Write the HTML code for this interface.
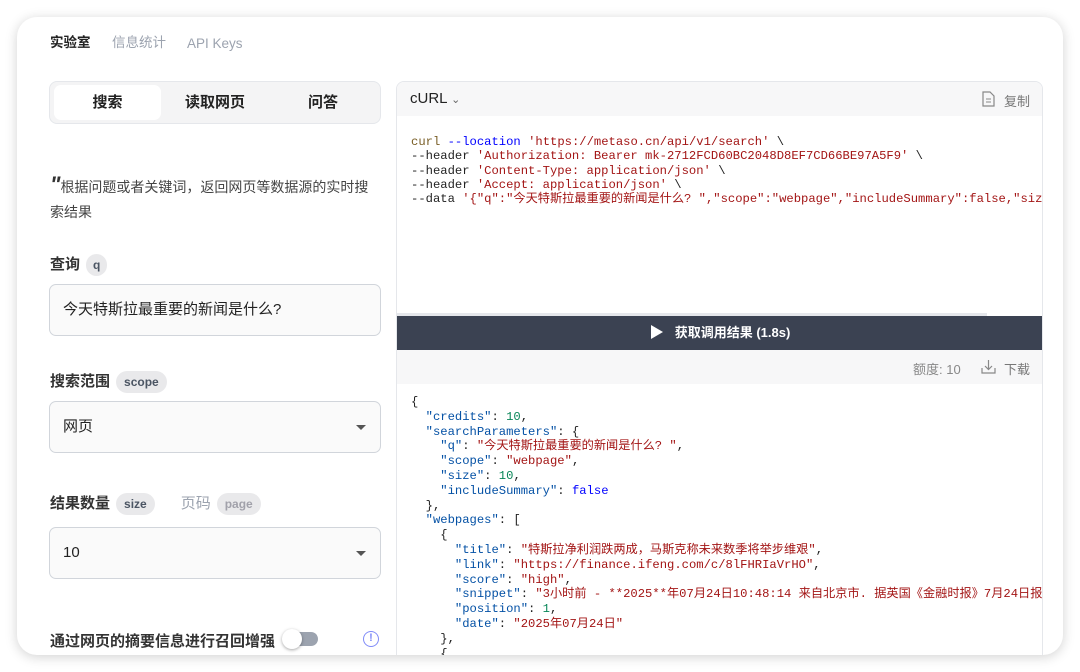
<!DOCTYPE html>
<html><head><meta charset="utf-8"><style>
*{box-sizing:border-box;margin:0;padding:0}
body{width:1080px;height:672px;background:#fff;font-family:"Liberation Sans","Noto Sans CJK SC",sans-serif;position:relative;overflow:hidden;color:#1f2937}
.card{position:absolute;left:17px;top:17px;width:1046px;height:638px;background:#fff;border-radius:20px;box-shadow:0 2px 12px rgba(0,0,0,.18);overflow:hidden}
.abs{position:absolute}
.nav{top:17px;font-size:13.5px;line-height:18px;height:18px}
.tabs{left:32px;top:64px;width:332px;height:43px;background:#f4f4f5;border:1px solid #e5e7eb;border-radius:8px}
.tab{position:absolute;top:3px;height:35px;line-height:35px;text-align:center;font-size:15px;font-weight:bold;color:#222}
.lbl{font-size:15px;font-weight:bold;color:#333}
.pill{display:inline-block;background:#e9e9eb;border-radius:11px;font-size:12px;padding:0 8px;height:22px;line-height:22px;color:#4b5563;font-weight:bold;vertical-align:middle;margin-left:6px}
.field{left:32px;width:332px;height:52px;border:1px solid #d1d5db;border-radius:7px;background:#fafafa;font-size:15px;padding-left:13px;line-height:50px;color:#222}
.tri{position:absolute;right:14px;top:23px;width:0;height:0;border-left:5px solid transparent;border-right:5px solid transparent;border-top:5px solid #555}
.rp{left:379px;top:64px;width:647px;height:600px;border:1px solid #e5e7eb;border-radius:8px;overflow:hidden;background:#fff}
.mono{font-family:"Liberation Mono","DejaVu Sans Mono","Noto Sans CJK SC",monospace;font-size:12.2px;white-space:pre;color:#222}
.s{color:#a31515}.k{color:#0451a5}.n{color:#098658}.b{color:#0000ff}.y{color:#795e26}
</style></head><body>
<div class="card">
 <div class="abs nav" style="left:33px;font-weight:bold;color:#222">实验室</div>
 <div class="abs nav" style="left:95px;color:#9ca3af">信息统计</div>
 <div class="abs nav" style="left:170px;color:#9ca3af;top:18px">API Keys</div>

 <div class="abs tabs">
  <div class="tab" style="left:4px;width:107px;background:#fff;border-radius:7px">搜索</div>
  <div class="tab" style="left:111px;width:108px">读取网页</div>
  <div class="tab" style="left:219px;width:108px">问答</div>
 </div>

 <div class="abs" style="left:33px;top:158px;width:330px;font-size:14px;line-height:25px;color:#444"><span style="font-size:22px;font-weight:bold;font-style:italic;line-height:10px;color:#333">"</span>根据问题或者关键词，返回网页等数据源的实时搜索结果</div>

 <div class="abs lbl" style="left:33px;top:236px">查询<span class="pill" style="padding:0 7px">q</span></div>
 <div class="abs field" style="top:267px">今天特斯拉最重要的新闻是什么?</div>

 <div class="abs lbl" style="left:33px;top:353px">搜索范围<span class="pill">scope</span></div>
 <div class="abs field" style="top:384px">网页<div class="tri"></div></div>

 <div class="abs lbl" style="left:33px;top:475px">结果数量<span class="pill">size</span><span style="color:#9ca3af;font-weight:normal;margin-left:26px">页码</span><span class="pill" style="color:#a1a1aa">page</span></div>
 <div class="abs field" style="top:510px">10<div class="tri"></div></div>

 <div class="abs lbl" style="left:33px;top:613px">通过网页的摘要信息进行召回增强</div>
 <div class="abs" style="left:266px;top:615px;width:35px;height:14px;background:#9ca3af;border-radius:7px"></div>
 <div class="abs" style="left:265px;top:612px;width:20px;height:20px;background:#fff;border-radius:50%;box-shadow:0 1px 3px rgba(0,0,0,.35)"></div>
 <div class="abs" style="left:346px;top:614px;width:16px;height:16px;border:1.5px solid #818cf8;border-radius:50%;color:#818cf8;font-size:11px;font-weight:bold;text-align:center;line-height:13px">!</div>

 <div class="abs rp">
  <div class="abs" style="left:0;top:0;width:647px;height:34px;background:#f7f7f8"></div>
  <div class="abs" style="left:13px;top:8px;font-size:15px;color:#222">cURL <span style="font-size:11px;color:#666">&#8964;</span></div>
  <svg class="abs" style="left:584px;top:9px" width="14" height="16" viewBox="0 0 14 16"><path d="M2 1h7l4 4v10H2z" fill="none" stroke="#888" stroke-width="1.2"/><path d="M5 8h5M5 11h5" stroke="#888"/></svg>
  <div class="abs" style="left:607px;top:9px;font-size:13px;color:#777">复制</div>
  <div class="abs mono" style="left:14px;top:53px;line-height:14.3px"><span class="y">curl</span> <span class="b">--location</span> <span class="s">'https://metaso.cn/api/v1/search'</span> \
--header <span class="s">'Authorization: Bearer mk-2712FCD60BC2048D8EF7CD66BE97A5F9'</span> \
--header <span class="s">'Content-Type: application/json'</span> \
--header <span class="s">'Accept: application/json'</span> \
--data <span class="s">'{"q":"今天特斯拉最重要的新闻是什么? ","scope":"webpage","includeSummary":false,"size":10}'</span></div>
  <div class="abs" style="left:0;top:231px;width:590px;height:3px;background:#e5e7eb"></div>
  <div class="abs" style="left:0;top:234px;width:647px;height:34px;background:#3b4252;color:#fff;font-size:13px;font-weight:bold;text-align:center;line-height:34px"><span style="display:inline-block;width:0;height:0;border-top:7px solid transparent;border-bottom:7px solid transparent;border-left:12px solid #fff;vertical-align:-2px;margin-right:12px"></span>获取调用结果 (1.8s)</div>
  <div class="abs" style="left:0;top:268px;width:647px;height:34px;background:#f7f7f8"></div>
  <div class="abs" style="left:516px;top:277px;font-size:13px;color:#888">额度: 10</div>
  <svg class="abs" style="left:584px;top:277px" width="15" height="15" viewBox="0 0 15 15"><path d="M7.5 1v9M4 7l3.5 3.5L11 7M1 9v5h13V9" fill="none" stroke="#888" stroke-width="1.2"/></svg>
  <div class="abs" style="left:607px;top:277px;font-size:13px;color:#777">下载</div>
  <div class="abs mono" style="left:14px;top:313px;line-height:14.8px">{
  <span class="k">"credits"</span>: <span class="n">10</span>,
  <span class="k">"searchParameters"</span>: {
    <span class="k">"q"</span>: <span class="s">"今天特斯拉最重要的新闻是什么? "</span>,
    <span class="k">"scope"</span>: <span class="s">"webpage"</span>,
    <span class="k">"size"</span>: <span class="n">10</span>,
    <span class="k">"includeSummary"</span>: <span class="b">false</span>
  },
  <span class="k">"webpages"</span>: [
    {
      <span class="k">"title"</span>: <span class="s">"特斯拉净利润跌两成，马斯克称未来数季将举步维艰"</span>,
      <span class="k">"link"</span>: <span class="s">"https://finance.ifeng.com/c/8lFHRIaVrHO"</span>,
      <span class="k">"score"</span>: <span class="s">"high"</span>,
      <span class="k">"snippet"</span>: <span class="s">"3小时前 - **2025**年07月24日10:48:14 来自北京市. 据英国《金融时报》7月24日报道"</span>
      <span class="k">"position"</span>: <span class="n">1</span>,
      <span class="k">"date"</span>: <span class="s">"2025年07月24日"</span>
    },
    {</div>
 </div>
</div>
</body></html>
